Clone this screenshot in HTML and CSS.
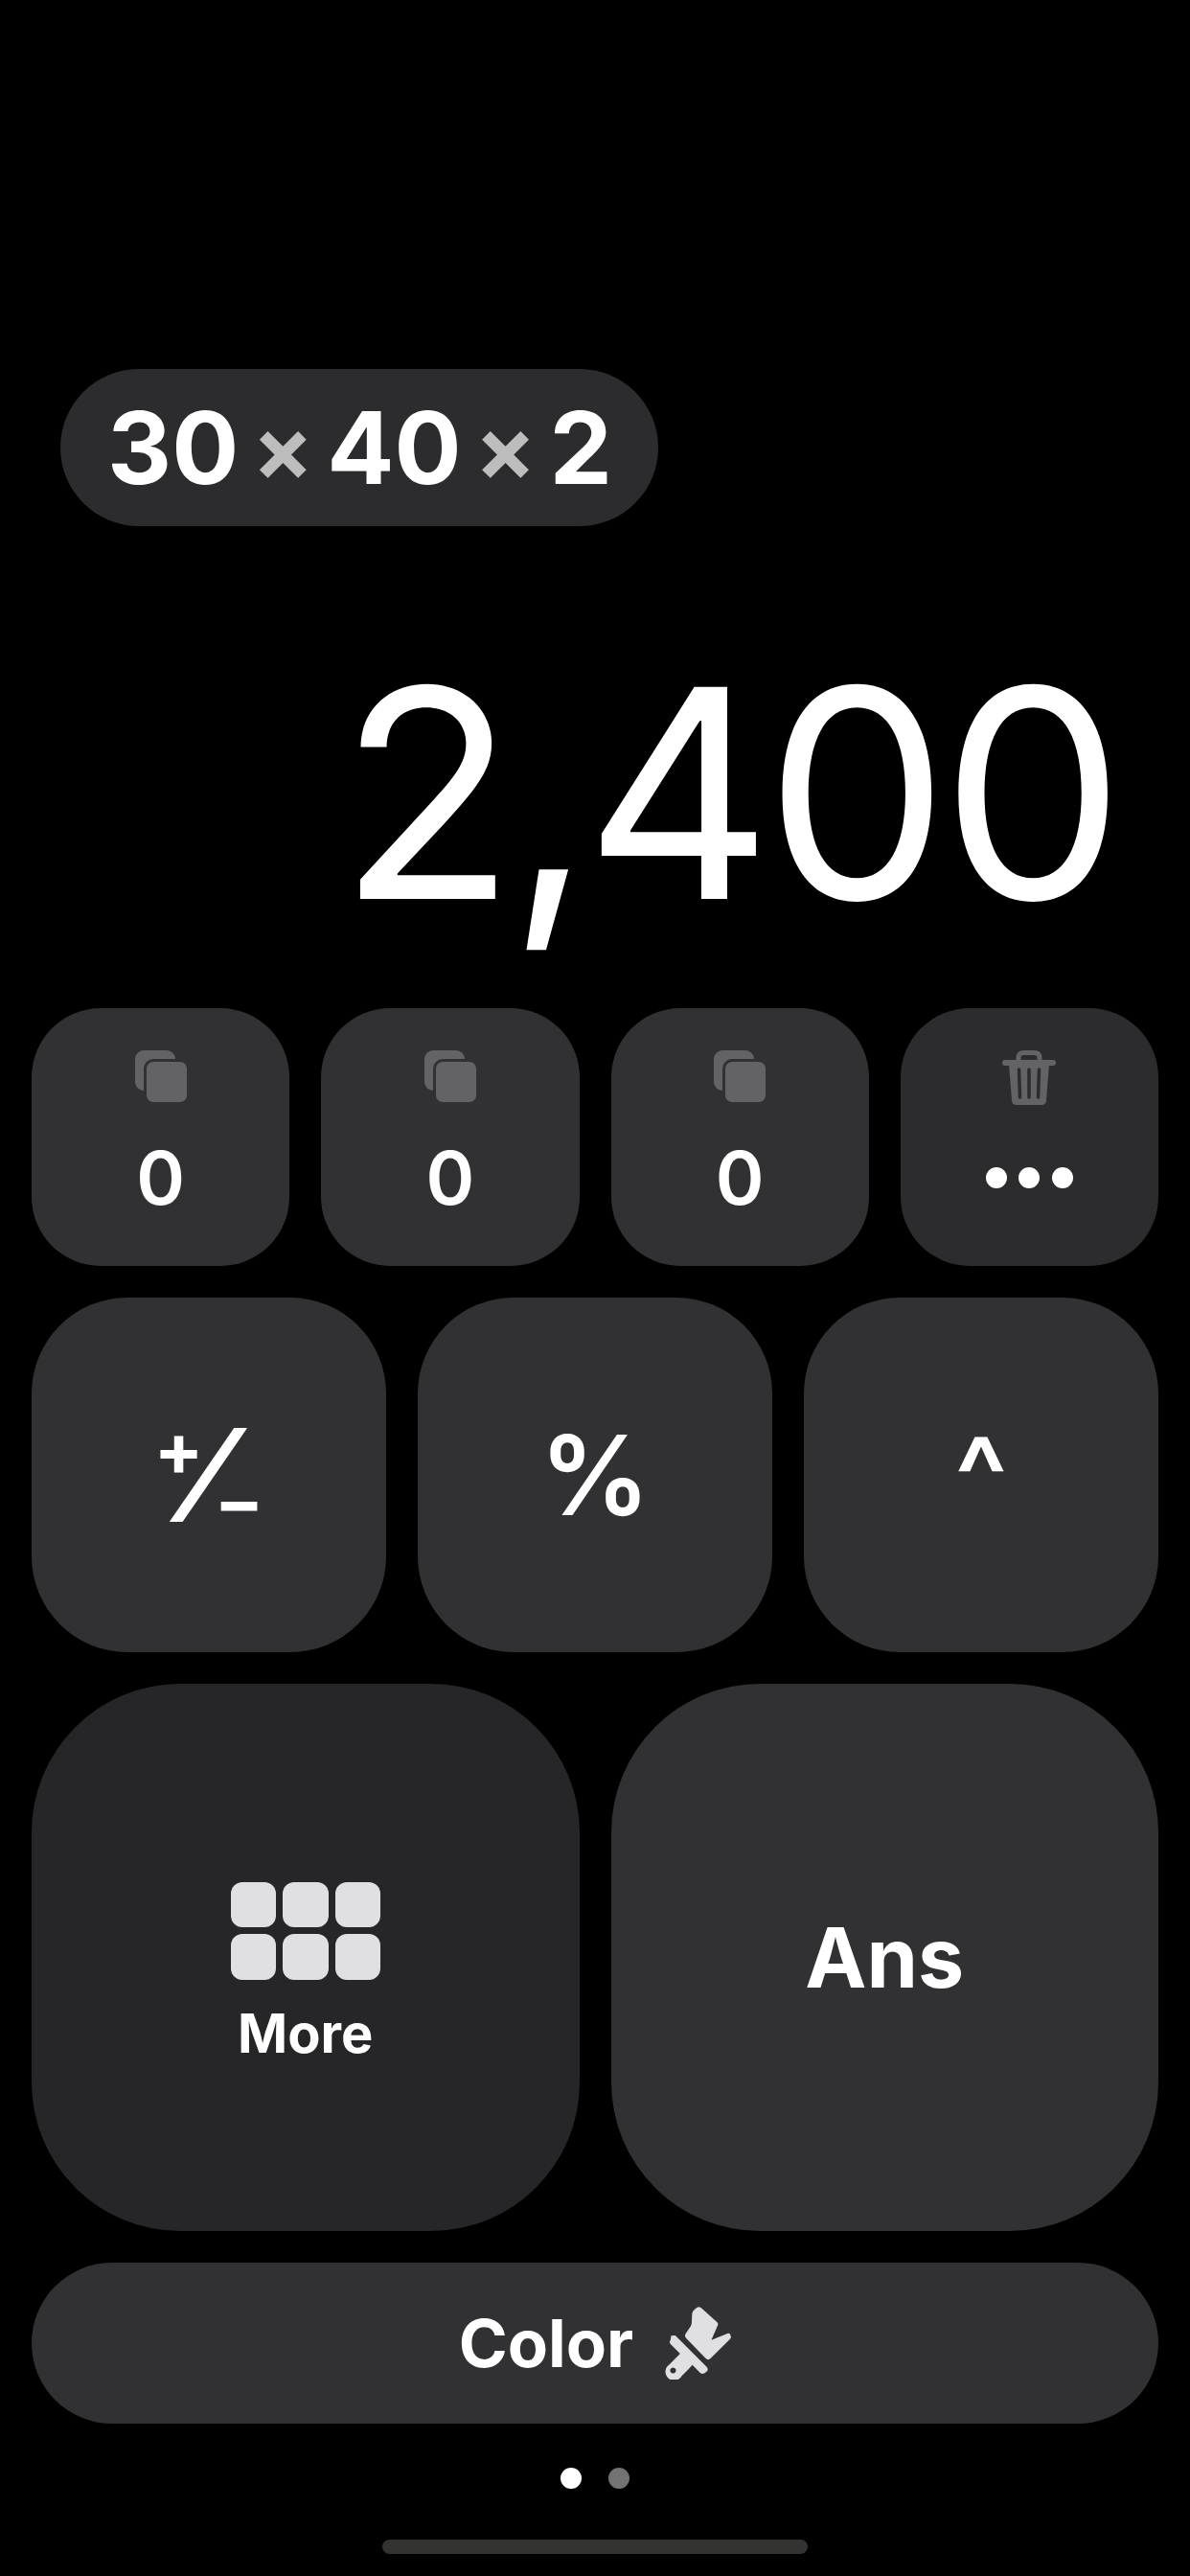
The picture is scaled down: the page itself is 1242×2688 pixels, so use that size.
FILE: index.html
```html
<!DOCTYPE html>
<html lang="en">
<head>
    <meta charset="UTF-8">
    <meta name="viewport" content="width=device-width, initial-scale=1.0">
    <title>Calculator</title>
    <link rel="stylesheet" href="styles.css">
</head>
<body>
    <div class="screen">
        <div class="expression">
            <span>30</span><span class="times">×</span><span>40</span><span class="times">×</span><span>2</span>
        </div>

        <div class="result">2,400</div>

        <div class="keys keys-four">
            <button class="key memory">
                <svg class="copy-icon" viewBox="0 0 54 54"><rect width="42" height="42" rx="9" fill="#636365"/><rect x="9" y="9" width="45" height="45" rx="10" fill="#313133"/><rect x="12" y="12" width="42" height="42" rx="7" fill="#636365"/></svg>
                <span>0</span>
            </button>
            <button class="key memory">
                <svg class="copy-icon" viewBox="0 0 54 54"><rect width="42" height="42" rx="9" fill="#636365"/><rect x="9" y="9" width="45" height="45" rx="10" fill="#313133"/><rect x="12" y="12" width="42" height="42" rx="7" fill="#636365"/></svg>
                <span>0</span>
            </button>
            <button class="key memory">
                <svg class="copy-icon" viewBox="0 0 54 54"><rect width="42" height="42" rx="9" fill="#636365"/><rect x="9" y="9" width="45" height="45" rx="10" fill="#313133"/><rect x="12" y="12" width="42" height="42" rx="7" fill="#636365"/></svg>
                <span>0</span>
            </button>
            <button class="key memory key-dim">
                <svg class="trash-icon" viewBox="0 0 56 57">
                    <path d="M17 12V8q0-5.500 5.500-5.500h11q5.500 0 5.500 5.500v4" fill="none" stroke="#636365" stroke-width="5"/>
                    <rect y="10" width="56" height="6" rx="3" fill="#636365"/>
                    <path d="M7 15h42l-3 37q0 5-5 5H15q-5 0-5-5z" fill="#636365"/>
                    <path d="M17.500 20l1 29M28 20v29M38.500 20l-1 29" stroke="#2c2c2e" stroke-width="3.500" stroke-linecap="round"/>
                </svg>
                <span class="dots"><i></i><i></i><i></i></span>
            </button>
        </div>

        <div class="keys keys-three">
            <button class="key op">
                <span class="plus-minus"><span class="pm-plus">+</span><span class="pm-slash">⁄</span><span class="pm-minus">−</span></span>
            </button>
            <button class="key op">%</button>
            <button class="key op"><span class="caret">^</span></button>
        </div>

        <div class="keys keys-two">
            <button class="key key-more">
                <span class="tiles"><i></i><i></i><i></i><i></i><i></i><i></i></span>
                <span class="more-label">More</span>
            </button>
            <button class="key key-ans">Ans</button>
        </div>

        <button class="key color-bar">
            <span>Color</span>
            <svg class="brush-icon" viewBox="760 82 208 226">
                <path d="M858 88q10-10 20 0l47 42q4 4 2 9l-20 46 50-20q5-2 8 2l2 6q2 5-2 9l-60 60q-8 8-16 0l-60-62q-6-6-2-14l16-24q3-5 3-12l1-24q0-10 11-18z" fill="#e0e0e2"/>
                <path d="M782 172l13-1 98 98q5 6 1 13l-9 7q-6 3-12-1l-25-25-15 16-18 18a27 27 0 1 1-38-36l33-33-29-29q-6-6-1-13zM788 271a9 9 0 1 0 .1 0z" fill-rule="evenodd" fill="#e0e0e2"/>
            </svg>
        </button>

        <div class="pager"><i class="on"></i><i></i></div>
        <div class="home-bar"></div>
    </div>
</body>
</html>
```

FILE: styles.css
```css
* {
    box-sizing: border-box;
}
html, body {
    margin: 0;
    background: #000;
}
.screen {
    width: 1242px;
    height: 2688px;
    overflow: hidden;
    padding: 385px 33px 0;
    display: flex;
    flex-direction: column;
    color: #fff;
    font-family: Inter, "Noto Sans", sans-serif;
}
.expression {
    align-self: flex-start;
    margin-left: 30px;
    height: 164px;
    width: 624px;
    padding: 0 48px 0 49px;
    border-radius: 82px;
    background: #2c2c2e;
    display: flex;
    align-items: center;
    justify-content: space-between;
    font-size: 104px;
    font-weight: 700;
}
.times {
    color: #bdbdbd;
    font-size: 95px;
    font-weight: 700;
}
.result {
    height: 503px;
    padding-right: 43px;
    padding-bottom: 73px;
    display: flex;
    align-items: flex-end;
    justify-content: flex-end;
    font-size: 304px;
    font-weight: 400;
    letter-spacing: -8px;
    line-height: 1;
}
.keys {
    display: grid;
    gap: 33px;
    margin-bottom: 33px;
}
.keys-four {
    grid-template-columns: repeat(4, 1fr);
}
.keys-three {
    grid-template-columns: repeat(3, 1fr);
}
.keys-two {
    grid-template-columns: repeat(2, 1fr);
}
.key {
    border: none;
    padding: 0;
    margin: 0;
    color: #fff;
    font-family: inherit;
    background: #313133;
    display: flex;
    flex-direction: column;
    align-items: center;
    justify-content: center;
}
.memory {
    height: 269px;
    border-radius: 72px;
    padding-bottom: 11px;
    font-size: 77px;
    font-weight: 600;
}
.memory span {
    line-height: 76px;
}
.key-dim {
    background: #2c2c2e;
}
.copy-icon {
    width: 54px;
    height: 54px;
    margin-bottom: 41px;
}
.trash-icon {
    width: 56px;
    height: 57px;
    margin-bottom: 38px;
}
.dots {
    display: flex;
    gap: 12.5px;
    height: 76px;
    align-items: center;
}
.dots i {
    width: 22px;
    height: 22px;
    border-radius: 50%;
    background: #fff;
}
.op {
    height: 370px;
    border-radius: 100px;
    font-size: 115px;
    font-weight: 600;
}
.plus-minus {
    display: flex;
    align-items: center;
    font-weight: 700;
}
.pm-plus {
    font-size: 76px;
    margin-top: -54px;
    margin-right: -9px;
}
.pm-slash {
    font-size: 135px;
    font-weight: 700;
}
.pm-minus {
    font-size: 76px;
    margin-top: 54px;
    margin-left: -8px;
}
.key-more {
    height: 571px;
    padding-top: 34px;
    border-radius: 155px;
    background: #262628;
}
.key-ans {
    height: 571px;
    border-radius: 155px;
    font-size: 86px;
    font-weight: 700;
}
.tiles {
    display: grid;
    grid-template-columns: repeat(3, 47.5px);
    gap: 7px;
}
.tiles i {
    height: 47.5px;
    border-radius: 12px;
    background: #e0e0e2;
}
.more-label {
    margin-top: 22px;
    font-size: 56px;
    font-weight: 700;
    line-height: 68px;
}
.color-bar {
    height: 168px;
    border-radius: 84px;
    flex-direction: row;
    gap: 32px;
    font-size: 69px;
    font-weight: 700;
}
.brush-icon {
    width: 70px;
    height: 76px;
}
.pager {
    display: flex;
    justify-content: center;
    gap: 28px;
    margin-top: 46px;
}
.pager i {
    width: 22px;
    height: 22px;
    border-radius: 50%;
    background: #737373;
}
.pager i.on {
    background: #fff;
}
.home-bar {
    width: 444px;
    height: 15px;
    margin: 53px auto 0;
    border-radius: 8px;
    background: #333331;
}
```
